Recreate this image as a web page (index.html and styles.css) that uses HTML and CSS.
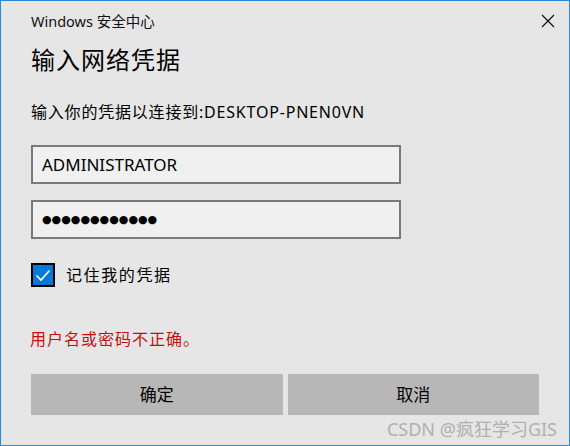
FILE: index.html
```html
<!DOCTYPE html>
<html lang="zh-CN">
<head>
<meta charset="utf-8">
<title>Windows 安全中心</title>
<link rel="stylesheet" href="styles.css">
</head>
<body>
<div class="dialog">
  <div class="titlebar">
    <span class="title">Windows 安全中心</span>
    <svg class="close" width="14" height="14" viewBox="0 0 14 14"><path d="M1 1L13 13M13 1L1 13" stroke="#111" stroke-width="1.2" fill="none"/></svg>
  </div>
  <h1 class="heading">输入网络凭据</h1>
  <p class="prompt">输入你的凭据以连接到:DESKTOP-PNEN0VN</p>
  <div class="field">ADMINISTRATOR</div>
  <div class="field password">●●●●●●●●●●●●</div>
  <div class="remember">
    <span class="checkbox"><svg width="20" height="20" viewBox="0 0 20 20"><path d="M3.5 10.5L8 15L16.5 5.5" stroke="#fff" stroke-width="1.6" fill="none"/></svg></span>
    <span class="remember-label">记住我的凭据</span>
  </div>
  <p class="error">用户名或密码不正确。</p>
  <div class="buttons">
    <div class="btn">确定</div>
    <div class="btn">取消</div>
  </div>
  <div class="watermark">CSDN @疯狂学习GIS</div>
</div>
</body>
</html>
```
FILE: styles.css
```css
html, body {
  margin: 0;
  padding: 0;
  background: #e6e6e6;
}
.dialog {
  position: relative;
  box-sizing: border-box;
  width: 570px;
  height: 446px;
  border: 1px solid #2b89d8;
  background: #e6e6e6;
  padding: 0 30px 0 30px;
  display: flex;
  flex-direction: column;
  font-family: "Noto Sans", "Noto Sans CJK SC", sans-serif;
  color: #000;
}
.titlebar {
  display: flex;
  align-items: center;
  justify-content: space-between;
  height: 20px;
  margin-top: 10px;
}
.title {
  font-size: 14.5px;
  line-height: 20px;
  color: #111;
}
.close {
  margin-right: -16px;
}
.heading {
  margin: 13px 0 0 0;
  font-size: 24px;
  line-height: 32px;
  font-weight: normal;
  letter-spacing: 1px;
}
.prompt {
  margin: 25px 0 0 0;
  font-size: 16px;
  line-height: 22px;
  letter-spacing: 0.8px;
}
.field {
  box-sizing: border-box;
  width: 370px;
  height: 39px;
  margin-top: 22px;
  border: 2px solid #7a7a7a;
  background: #f0f0f0;
  padding: 0 9px;
  font-size: 17px;
  line-height: 35px;
  color: #000;
}
.field.password {
  margin-top: 16px;
  font-size: 11px;
  letter-spacing: 0;
  font-family: "DejaVu Sans", sans-serif;
}
.remember {
  display: flex;
  align-items: center;
  margin-top: 24px;
  height: 24px;
}
.checkbox {
  box-sizing: border-box;
  width: 24px;
  height: 24px;
  border: 2px solid #000;
  background: #0a78d6;
  display: flex;
  align-items: center;
  justify-content: center;
}
.remember-label {
  margin-left: 11px;
  font-size: 16px;
  line-height: 22px;
  letter-spacing: 1.6px;
}
.error {
  margin: 41px 0 0 -1px;
  font-size: 16px;
  line-height: 22px;
  color: #c50f0f;
  letter-spacing: 1px;
}
.buttons {
  display: flex;
  gap: 5px;
  margin-top: 24px;
}
.btn {
  flex: 1;
  height: 41px;
  background: #b7b7b7;
  font-size: 17px;
  line-height: 41px;
  text-align: center;
  color: #000;
}
.watermark {
  position: absolute;
  right: 12px;
  bottom: 5px;
  font-size: 18px;
  line-height: 22px;
  color: #b0b0b0;
}
```
